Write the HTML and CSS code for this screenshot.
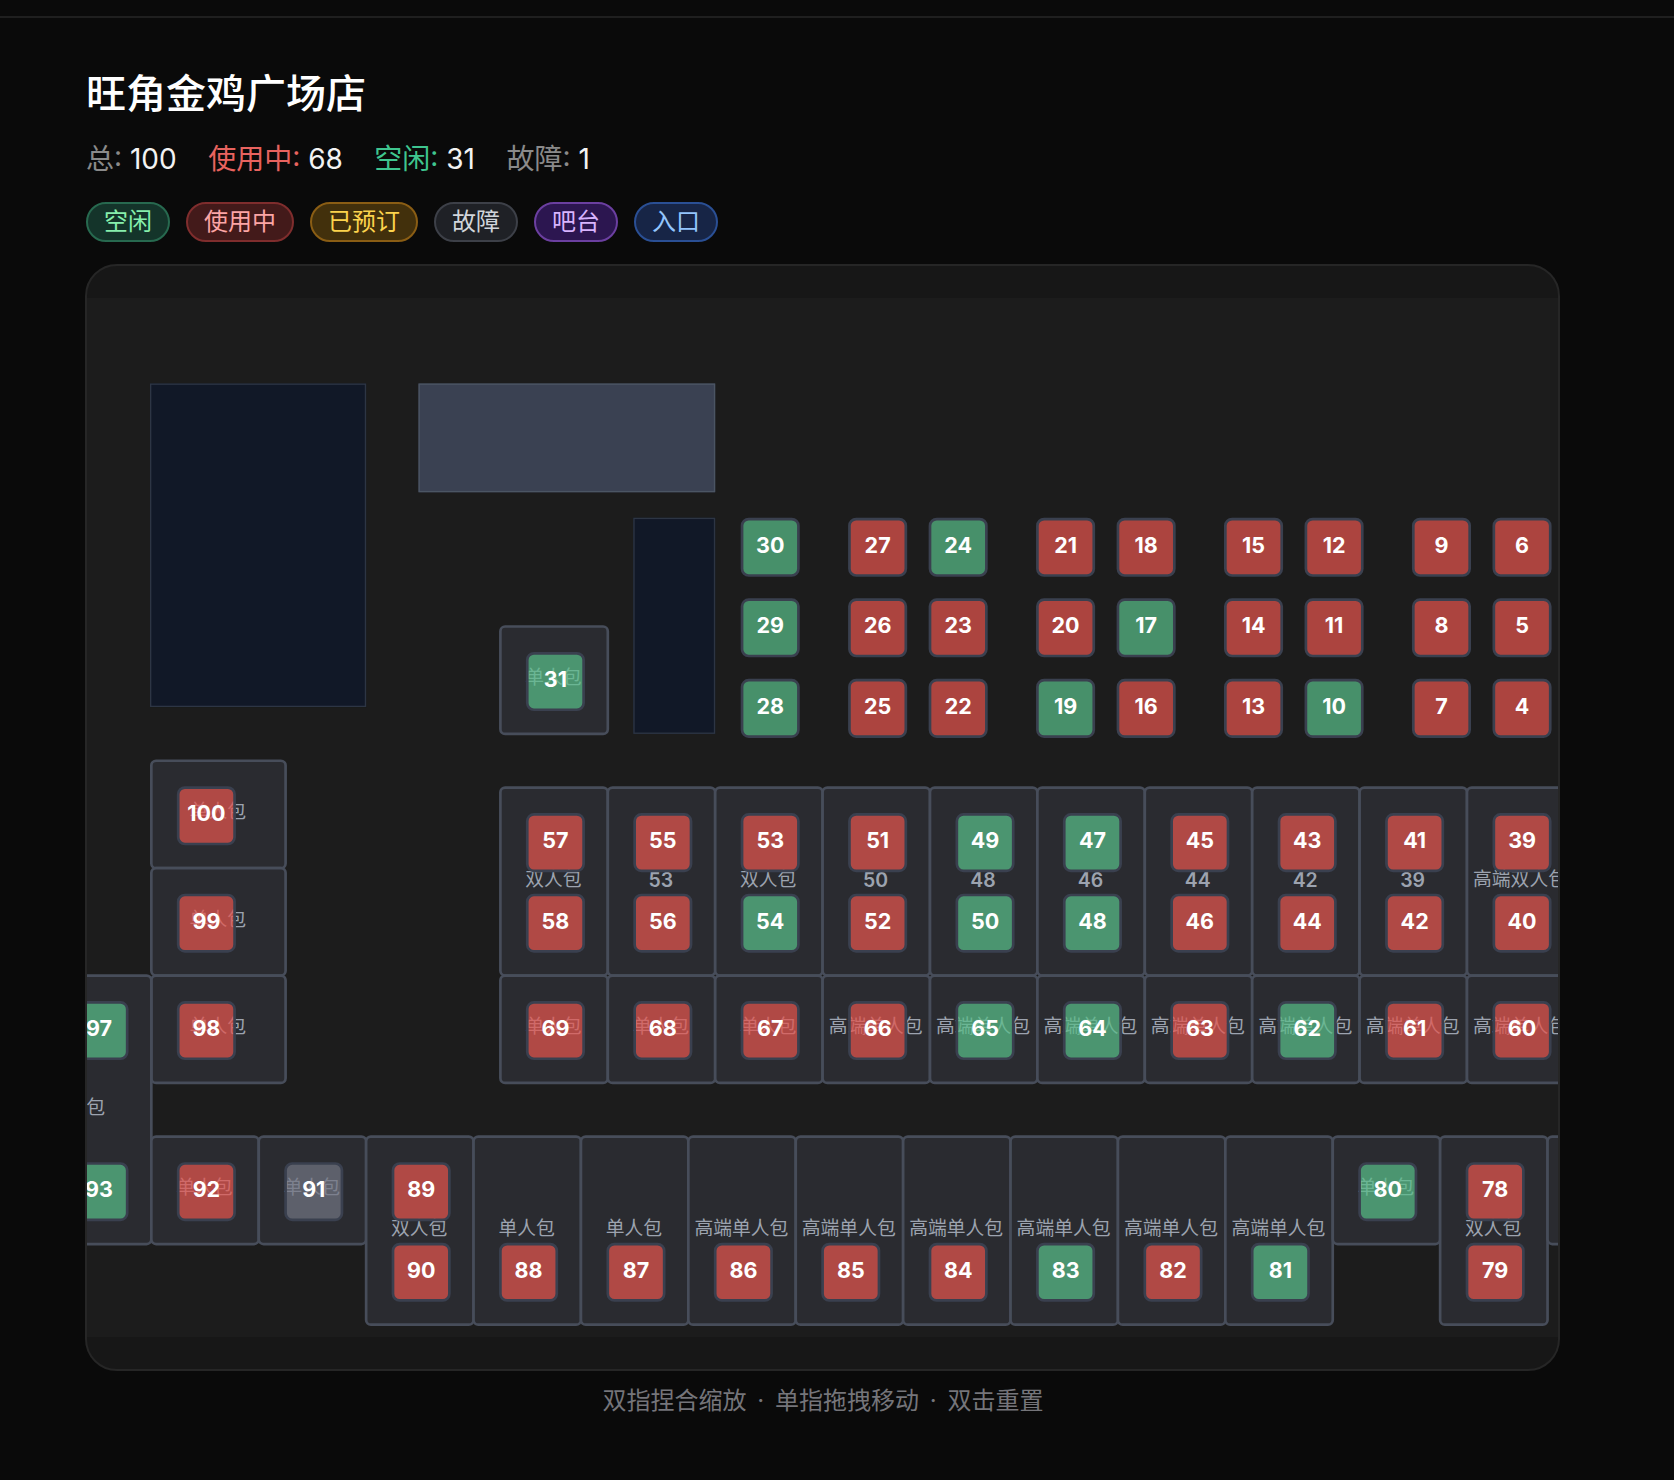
FILE: index.html
```html
<!DOCTYPE html>
<html lang="zh-CN">
<head>
  <meta charset="UTF-8" />
  <meta name="viewport" content="width=device-width, initial-scale=1" />
  <title>旺角金鸡广场店</title>
  <link rel="stylesheet" href="styles.css">
</head>
<body>
  <div class="top-bar"></div>

  <main class="page">
    <h1 class="store-name">旺角金鸡广场店</h1>

    <div class="stats">
      <span class="stat"><span class="stat-key">总:</span> 100</span>
      <span class="stat"><span class="stat-key busy">使用中:</span> 68</span>
      <span class="stat"><span class="stat-key free">空闲:</span> 31</span>
      <span class="stat"><span class="stat-key">故障:</span> 1</span>
    </div>

    <div class="legend">
      <span class="pill pill-free">空闲</span>
      <span class="pill pill-busy">使用中</span>
      <span class="pill pill-booked">已预订</span>
      <span class="pill pill-broken">故障</span>
      <span class="pill pill-bar">吧台</span>
      <span class="pill pill-door">入口</span>
    </div>

    <section class="map-panel">
      <div class="map-view">
        <div class="map-canvas" id="mapCanvas"></div>
      </div>
    </section>

    <p class="hint">双指捏合缩放 <span class="hint-dot">·</span> 单指拖拽移动 <span class="hint-dot">·</span> 双击重置</p>
  </main>

  <script src="map.js"></script>
</body>
</html>
```

FILE: styles.css
```css
* {
  box-sizing: border-box;
}

body {
  margin: 0;
  min-height: 100vh;
  background: #0a0a0a;
  color: #f3f3f3;
  font-family: Inter, "Noto Sans CJK SC", sans-serif;
}

.top-bar {
  height: 18px;
  border-bottom: 2px solid #1f1f1f;
}

.page {
  width: 1474px;
  margin-left: 86px;
  padding-top: 48px;
}

.store-name {
  margin: 0;
  font-size: 40px;
  line-height: 56px;
  font-weight: 500;
  color: #fff;
}

.stats {
  display: flex;
  gap: 31.5px;
  margin-top: 17px;
  font-size: 28px;
  line-height: 40px;
}

.stat-key {
  color: #8a8a8a;
}

.stat-key.busy {
  color: #e8635f;
}

.stat-key.free {
  color: #3fc68f;
}

.legend {
  display: flex;
  gap: 16px;
  margin-top: 23px;
}

.pill {
  height: 40px;
  padding: 0 16px;
  border: 2px solid;
  border-radius: 20px;
  font-size: 24px;
  line-height: 36px;
}

.pill-free {
  background: #14342a;
  border-color: #27694f;
  color: #86efac;
}

.pill-busy {
  background: #431a1a;
  border-color: #7f2d2d;
  color: #fca5a5;
}

.pill-booked {
  background: #42300c;
  border-color: #8a5d14;
  color: #fcd34d;
}

.pill-broken {
  background: #1f2126;
  border-color: #3d4048;
  color: #d1d5db;
}

.pill-bar {
  background: #2c1650;
  border-color: #6b3fa0;
  color: #d8b4fe;
}

.pill-door {
  background: #172546;
  border-color: #2a4f94;
  color: #93c5fd;
}

.map-panel {
  margin: 22px 0 0 -1px;
  padding: 32px 0;
  background: #171717;
  border: 2px solid #262626;
  border-radius: 32px;
  overflow: hidden;
}

.map-view {
  position: relative;
  height: 1039px;
  background: #1c1c1c;
  overflow: hidden;
}

.map-canvas {
  position: absolute;
  left: 0;
  top: 0;
  transform-origin: 0 0;
  transform: translate(63px, 85.5px) scale(1.3425);
}

.block {
  position: absolute;
  border: 1.2px solid #2d3544;
}

.block-dark {
  background: #111827;
}

.block-bar {
  background: #3a4152;
  border-color: #4b5563;
}

.room {
  position: absolute;
  display: flex;
  justify-content: center;
  align-items: center;
  padding-bottom: 3px;
  background: #2a2b30;
  border: 2px solid #474d5a;
  border-radius: 4.5px;
}

.room-label {
  font-size: 14px;
  line-height: 18px;
  color: #9ca3af;
  white-space: nowrap;
}

.room-label.digits {
  margin-top: 2px;
  font-size: 14.5px;
  font-weight: 600;
}

.seat {
  position: absolute;
  display: flex;
  justify-content: center;
  align-items: center;
  width: 44px;
  height: 44px;
  padding-bottom: 4px;
  border: 2px solid #3a404f;
  border-radius: 6px;
  font-size: 16px;
  font-weight: 700;
  color: #fff;
}

.seat-free {
  background: rgba(89, 190, 137, 0.72);
}

.seat-busy {
  background: rgba(228, 85, 77, 0.72);
}

.seat-broken {
  background: rgba(113, 117, 130, 0.72);
}

.hint {
  margin: 14px 0 0;
  text-align: center;
  font-size: 24px;
  line-height: 32px;
  color: #75757a;
}

.hint-dot {
  margin: 0 4px;
}
```

FILE: map.js
```js
// 1 格 = 20px，画布整体用 transform 缩放
const CELL = 20;
const canvas = document.getElementById('mapCanvas');

const blocks = [
  ['block-dark', 0, 0, 8, 12],
  ['block-bar', 10, 0, 11, 4],
  ['block-dark', 18, 5, 3, 8]
];

// x, y, 宽, 高, 名称
const rooms = [
  [13, 9, 4, 4, '单人包'],
  [0, 14, 5, 4, '单人包'],
  [0, 18, 5, 4, '单人包'],
  [0, 22, 5, 4, '单人包'],
  [-5.5, 22, 5.5, 10, '单人包'],
  [13, 15, 4, 7, '双人包'],
  [17, 15, 4, 7, '53'],
  [21, 15, 4, 7, '双人包'],
  [25, 15, 4, 7, '50'],
  [29, 15, 4, 7, '48'],
  [33, 15, 4, 7, '46'],
  [37, 15, 4, 7, '44'],
  [41, 15, 4, 7, '42'],
  [45, 15, 4, 7, '39'],
  [49, 15, 4, 7, '高端双人包'],
  [13, 22, 4, 4, '单人包'],
  [17, 22, 4, 4, '单人包'],
  [21, 22, 4, 4, '单人包'],
  [25, 22, 4, 4, '高端单人包'],
  [29, 22, 4, 4, '高端单人包'],
  [33, 22, 4, 4, '高端单人包'],
  [37, 22, 4, 4, '高端单人包'],
  [41, 22, 4, 4, '高端单人包'],
  [45, 22, 4, 4, '高端单人包'],
  [49, 22, 4, 4, '高端单人包'],
  [0, 28, 4, 4, '单人包'],
  [4, 28, 4, 4, '单人包'],
  [8, 28, 4, 7, '双人包'],
  [12, 28, 4, 7, '单人包'],
  [16, 28, 4, 7, '单人包'],
  [20, 28, 4, 7, '高端单人包'],
  [24, 28, 4, 7, '高端单人包'],
  [28, 28, 4, 7, '高端单人包'],
  [32, 28, 4, 7, '高端单人包'],
  [36, 28, 4, 7, '高端单人包'],
  [40, 28, 4, 7, '高端单人包'],
  [44, 28, 4, 4, '单人包'],
  [48, 28, 4, 7, '双人包'],
  [52, 28, 4, 4, '']
];

// 编号, x, y, 状态 (f 空闲 / b 使用中 / x 故障)
const seats = [
  [30, 22, 5, 'f'], [29, 22, 8, 'f'], [28, 22, 11, 'f'],
  [27, 26, 5, 'b'], [26, 26, 8, 'b'], [25, 26, 11, 'b'],
  [24, 29, 5, 'f'], [23, 29, 8, 'b'], [22, 29, 11, 'b'],
  [21, 33, 5, 'b'], [20, 33, 8, 'b'], [19, 33, 11, 'f'],
  [18, 36, 5, 'b'], [17, 36, 8, 'f'], [16, 36, 11, 'b'],
  [15, 40, 5, 'b'], [14, 40, 8, 'b'], [13, 40, 11, 'b'],
  [12, 43, 5, 'b'], [11, 43, 8, 'b'], [10, 43, 11, 'f'],
  [9, 47, 5, 'b'], [8, 47, 8, 'b'], [7, 47, 11, 'b'],
  [6, 50, 5, 'b'], [5, 50, 8, 'b'], [4, 50, 11, 'b'],
  [31, 14, 10, 'f'],
  [100, 1, 15, 'b'], [99, 1, 19, 'b'], [98, 1, 23, 'b'],
  [97, -3, 23, 'f'], [93, -3, 29, 'f'],
  [57, 14, 16, 'b'], [58, 14, 19, 'b'],
  [55, 18, 16, 'b'], [56, 18, 19, 'b'],
  [53, 22, 16, 'b'], [54, 22, 19, 'f'],
  [51, 26, 16, 'b'], [52, 26, 19, 'b'],
  [49, 30, 16, 'f'], [50, 30, 19, 'f'],
  [47, 34, 16, 'f'], [48, 34, 19, 'f'],
  [45, 38, 16, 'b'], [46, 38, 19, 'b'],
  [43, 42, 16, 'b'], [44, 42, 19, 'b'],
  [41, 46, 16, 'b'], [42, 46, 19, 'b'],
  [39, 50, 16, 'b'], [40, 50, 19, 'b'],
  [69, 14, 23, 'b'], [68, 18, 23, 'b'], [67, 22, 23, 'b'], [66, 26, 23, 'b'],
  [65, 30, 23, 'f'], [64, 34, 23, 'f'], [63, 38, 23, 'b'], [62, 42, 23, 'f'],
  [61, 46, 23, 'b'], [60, 50, 23, 'b'],
  [92, 1, 29, 'b'], [91, 5, 29, 'x'],
  [89, 9, 29, 'b'], [90, 9, 32, 'b'],
  [88, 13, 32, 'b'], [87, 17, 32, 'b'], [86, 21, 32, 'b'], [85, 25, 32, 'b'],
  [84, 29, 32, 'b'], [83, 33, 32, 'f'], [82, 37, 32, 'b'], [81, 41, 32, 'f'],
  [80, 45, 29, 'f'],
  [78, 49, 29, 'b'], [79, 49, 32, 'b']
];

const seatClass = { f: 'seat-free', b: 'seat-busy', x: 'seat-broken' };

// edge: 边框压在格线上多出来的宽度
function place(el, x, y, w, h, edge) {
  el.style.left = x * CELL - edge / 4 + 'px';
  el.style.top = y * CELL - edge / 4 + 'px';
  if (w) {
    el.style.width = w * CELL + edge + 'px';
    el.style.height = h * CELL + edge + 'px';
  }
  canvas.appendChild(el);
}

blocks.forEach(([cls, x, y, w, h]) => {
  const el = document.createElement('div');
  el.className = 'block ' + cls;
  place(el, x, y, w, h, 1);
});

rooms.forEach(([x, y, w, h, name]) => {
  const el = document.createElement('div');
  el.className = 'room';
  const label = document.createElement('span');
  label.className = /^\d+$/.test(name) ? 'room-label digits' : 'room-label';
  label.textContent = name;
  el.appendChild(label);
  place(el, x, y, w, h, 2);
});

seats.forEach(([num, x, y, state]) => {
  const el = document.createElement('div');
  el.className = 'seat ' + seatClass[state];
  el.textContent = num;
  place(el, x, y, 0, 0, 0);
});
```
